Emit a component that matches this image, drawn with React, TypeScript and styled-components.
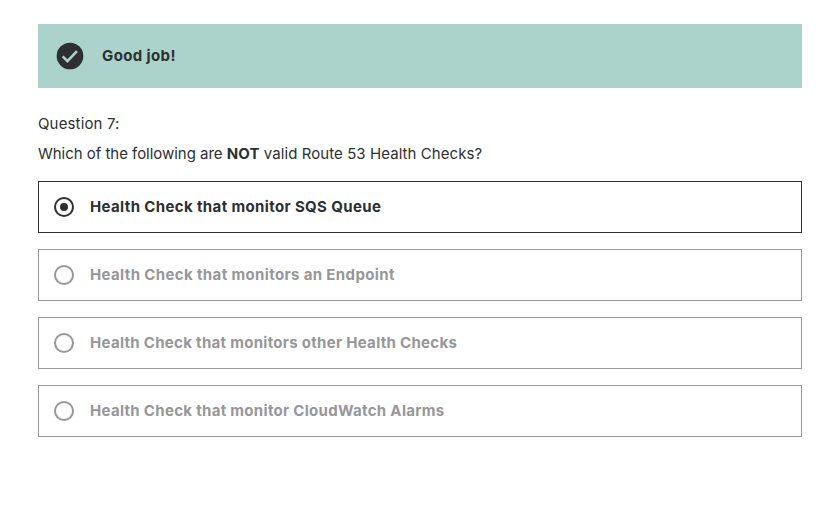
import React from "react";
import styled, { createGlobalStyle } from "styled-components";

const GlobalStyle = createGlobalStyle`
  * { box-sizing: border-box; }
  body { margin: 0; background: #fff; color: #2d2f31; font-family: Inter, "Liberation Sans", sans-serif; font-size: 15px; line-height: 22px; }
`;

const Page = styled.main`
  padding: 24px 22px 0 38px;
`;

const Banner = styled.div`
  display: flex;
  align-items: center;
  gap: 16px;
  height: 64px;
  padding: 0 16px;
  background: #acd2cc;
`;

const CheckIcon = styled.svg`
  width: 32px;
  height: 32px;
  flex: none;
`;

const Phrase = styled.span<{ $spacing: number }>`
  letter-spacing: ${(p) => p.$spacing}px;
  white-space: pre;
`;

const BannerTitle = styled(Phrase)`
  font-weight: 700;
`;

const QuestionLabel = styled.div`
  margin-top: 25px;
`;

const Prompt = styled.div`
  display: flex;
  margin-top: 8px;
`;

const Strong = styled(Phrase)`
  font-weight: 700;
`;

const Answers = styled.ul`
  list-style: none;
  margin: 16px 0 0;
  padding: 0;
  display: grid;
  gap: 16px;
`;

const Answer = styled.li<{ $selected: boolean }>`
  display: flex;
  align-items: center;
  gap: 16px;
  height: 52px;
  padding: 0 15px;
  border: 1px solid ${(p) => (p.$selected ? "#2d2f31" : "#969798")};
  color: ${(p) => (p.$selected ? "#2d2f31" : "#969798")};
  font-weight: 700;
`;

const Radio = styled.span<{ $selected: boolean }>`
  display: grid;
  place-items: center;
  flex: none;
  width: 20px;
  height: 20px;
  border: 2px solid currentColor;
  border-radius: 50%;

  &::after {
    content: "";
    width: 8px;
    height: 8px;
    border-radius: 50%;
    background: ${(p) => (p.$selected ? "currentColor" : "transparent")};
  }
`;

const answers = [
  { text: "Health Check that monitor SQS Queue", selected: true, spacing: 0.37 },
  { text: "Health Check that monitors an Endpoint", selected: false, spacing: 0.37 },
  { text: "Health Check that monitors other Health Checks", selected: false, spacing: 0.3 },
  { text: "Health Check that monitor CloudWatch Alarms", selected: false, spacing: 0.31 },
];

export default function App() {
  return (
    <>
      <GlobalStyle />
      <Page>
        <Banner>
          <CheckIcon viewBox="0 0 24 24" aria-hidden="true">
            <circle cx="12" cy="12" r="10" fill="#2d2f31" />
            <path d="M6.5 12.3 10.1 15.9 17.2 8.4" fill="none" stroke="#acd2cc" strokeWidth="1.9" />
          </CheckIcon>
          <BannerTitle $spacing={0.38}>Good job!</BannerTitle>
        </Banner>
        <QuestionLabel>
          <Phrase $spacing={0.15}>Question 7:</Phrase>
        </QuestionLabel>
        <Prompt>
          <Phrase $spacing={-0.03}>{"Which of the following are "}</Phrase>
          <Strong $spacing={0.1}>NOT</Strong>
          <Phrase $spacing={0.07}>{" valid Route 53 Health Checks?"}</Phrase>
        </Prompt>
        <Answers>
          {answers.map((a) => (
            <Answer key={a.text} $selected={a.selected}>
              <Radio $selected={a.selected} />
              <Phrase $spacing={a.spacing}>{a.text}</Phrase>
            </Answer>
          ))}
        </Answers>
      </Page>
    </>
  );
}
